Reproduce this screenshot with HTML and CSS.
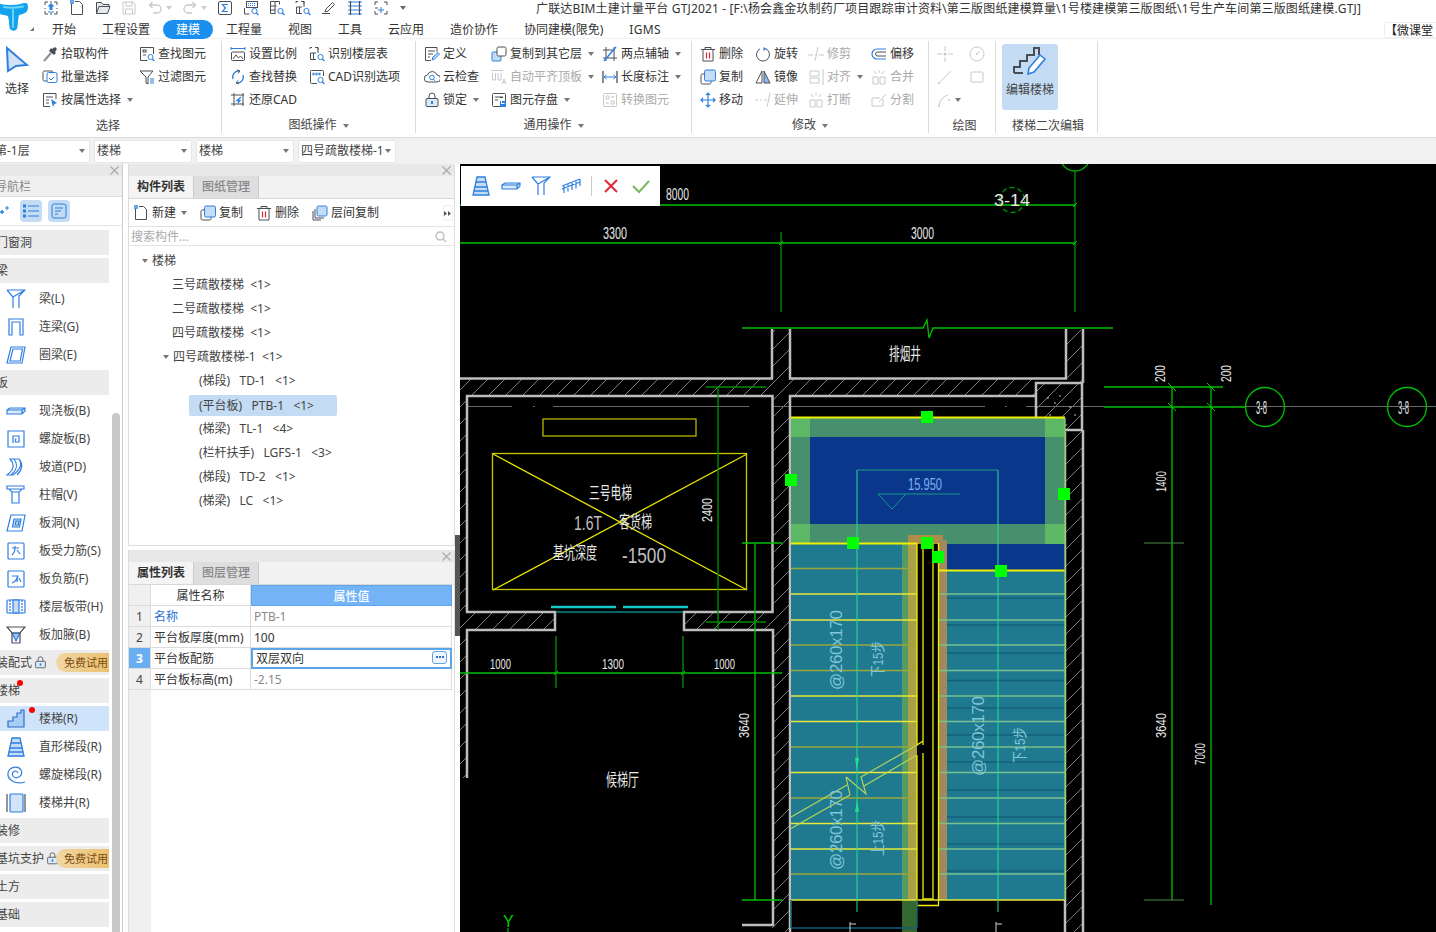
FILE: index.html
```html
<!DOCTYPE html>
<html lang="zh">
<head>
<meta charset="utf-8">
<title>GTJ2021</title>
<link rel="stylesheet" href="styles.css">
</head>
<body>
<svg class="defs" width="0" height="0" aria-hidden="true">
<defs>
<g id="x"><path d="M1.500 1.500l8 8M9.500 1.500l-8 8" stroke="#aaa" stroke-width="1.200" fill="none"/></g>
<g id="import"><path d="M2 2h3M11 2h3M2 14h3M11 14h3M2 2v3M14 2v3M2 11v3M14 11v3M2 8v1M14 8v1M7 2h2M7 14h2" fill="none" stroke="#4a4f57"/><path d="M8 3l3.500 3.500H9.500V10h-3V6.500H4.500z" fill="#2f7fe0"/><path d="M5 12h6" stroke="#2f7fe0"/></g>
<g id="newdoc"><path d="M2.500 3.500V14.500h11V4.500l-3-3H6" fill="none" stroke="#4a4f57"/><path d="M1 0h4v4H1z" fill="#2f7fe0" opacity=".7"/></g>
<g id="open"><path d="M1.500 13.500V2.500h5l1.500 2h6v2M1.500 13.500l2.500-7h11l-2.500 7z" fill="#e6e9ed" stroke="#4a4f57"/></g>
<g id="save"><path d="M2 2h10l2 2v10H2zM5 2v4h6V2M4.500 14V9h7v5" fill="none" stroke="#c8c8c8"/></g>
<g id="undo"><path d="M3 5h7a4 4 0 0 1 0 8H6M5.500 2L2.500 5l3 3" fill="none" stroke="#c8c8c8" stroke-width="1.300"/></g>
<g id="redo"><path d="M13 5H6a4 4 0 0 0 0 8h4M10.500 2l3 3-3 3" fill="none" stroke="#c8c8c8" stroke-width="1.300"/></g>
<g id="sum"><rect x="1.500" y="1.500" width="13" height="13" rx="1.500" fill="none" stroke="#4a4f57"/><path d="M11 4.500H5.500L8.500 8l-3 3.500H11" fill="none" stroke="#2f7fe0" stroke-width="1.200"/></g>
<g id="gridmag"><path d="M1.500 1.500h9v3M1.500 1.500v12h5M1.500 6h6M1.500 10h5M6 1.500v12" fill="none" stroke="#4a4f57"/><circle cx="11.500" cy="11" r="2.600" fill="none" stroke="#2f7fe0"/><path d="M13.400 13l2 2" stroke="#2f7fe0" stroke-width="1.300"/></g>
<g id="calcmag"><path d="M1.500 14V8M1.500 14h5" fill="none" stroke="#4a4f57"/><rect x="3.500" y="1.500" width="11" height="6" fill="none" stroke="#4a4f57"/><path d="M5 3.500h8M5 5.500h8" stroke="#2f7fe0" stroke-dasharray="1 1"/><circle cx="11.500" cy="11" r="2.600" fill="none" stroke="#2f7fe0"/><path d="M13.400 13l2 2" stroke="#2f7fe0" stroke-width="1.300"/></g>
<g id="pencil"><path d="M1 13.500h8" stroke="#4a4f57"/><path d="M4 12l1-3 6.500-6.500 2 2L7 11z" fill="#fff" stroke="#4a4f57"/></g>
<g id="columns"><path d="M1 2h14M1 14h14M1 6h14M1 10h14" stroke="#2f7fe0"/><path d="M3.500 1v14M12.500 1v14" stroke="#4a4f57" stroke-width="1.200"/></g>
<g id="scan"><path d="M2 5V2h3M11 2h3v3M14 11v3h-3M5 14H2v-3M2 8h3" fill="none" stroke="#4a4f57"/><path d="M8 7v6M5 10h6" stroke="#2f7fe0"/></g>

<g id="pick"><path d="M2 15l7-8" stroke="#8a9099" stroke-width="2"/><path d="M7 5l5 4 2-2-1-1 2-3-2-2-3 2-1-1z" fill="#4a4f57"/></g>
<g id="batch"><rect x="1" y="2" width="10" height="10" rx="1.500" fill="none" stroke="#4a4f57"/><rect x="5" y="3.500" width="10" height="10" rx="1.500" fill="#fff" stroke="#2f7fe0"/><path d="M7 9l2 2 3-3" fill="none" stroke="#2f7fe0"/></g>
<g id="attr"><path d="M14 7V1.500H1.500v13H8" fill="none" stroke="#4a4f57"/><path d="M4 5h7M4 8h3M4 11h3" stroke="#4a4f57"/><path d="M9 7l6 4-2.500 1L11 15z" fill="#2f7fe0"/></g>
<g id="find"><path d="M14.500 8V1.500h-13v13h7" fill="none" stroke="#4a4f57"/><rect x="4" y="4" width="3" height="2" fill="none" stroke="#4a4f57"/><path d="M4 9h3" stroke="#4a4f57"/><circle cx="11.500" cy="11" r="2.500" fill="none" stroke="#2f7fe0"/><path d="M13.300 13l2 2" stroke="#2f7fe0" stroke-width="1.300"/></g>
<g id="filter"><path d="M1 2h13L9 8v7l-2-1V8z" fill="none" stroke="#4a4f57"/><path d="M11 10h4M11 12h4M11 14h4" stroke="#2f7fe0"/></g>
<g id="scale"><path d="M1 1v3M15 1v3M1 2.500h14" stroke="#2f7fe0"/><rect x="1.500" y="6" width="13" height="8.500" rx="1" fill="none" stroke="#4a4f57"/><path d="M3 13l3-4 2.500 3 2-2 2.500 3" fill="none" stroke="#4a4f57"/></g>
<g id="replace"><path d="M3 10a6 6 0 0 1 6-8M13 6a6 6 0 0 1-6 8" fill="none" stroke="#2f7fe0" stroke-width="1.400"/><path d="M7 1l3 1-2 2.500M9 15l-3-1 2-2.500" fill="none" stroke="#4a4f57"/></g>
<g id="restore"><path d="M4 1v13M1 12h13M1 3h13M13 1v13" stroke="#4a4f57"/><path d="M11 5L7 8.500h3L8 11" fill="none" stroke="#2f7fe0" stroke-width="1.300"/></g>
<g id="floors"><path d="M1 3V1.500h2M6 1.500h3V4M1.500 7H7M1.500 7v6.500H7M4.500 7v6.500M9 1.500V7" fill="none" stroke="#4a4f57"/><circle cx="11.500" cy="11" r="2.600" fill="none" stroke="#2f7fe0"/><path d="M13.400 13l2 2" stroke="#2f7fe0" stroke-width="1.300"/></g>
<g id="cadopt"><path d="M14.500 7V2.500a1 1 0 0 0-1-1h-11a1 1 0 0 0-1 1v11a1 1 0 0 0 1 1H8" fill="none" stroke="#4a4f57"/><path d="M3.500 5h8" stroke="#2f7fe0" stroke-width="2.500" stroke-dasharray="2 1"/><circle cx="11.500" cy="11" r="2.600" fill="none" stroke="#2f7fe0"/><path d="M13.400 13l2 2" stroke="#2f7fe0" stroke-width="1.300"/></g>
<g id="define"><path d="M13 6V1.500H1.500v13H7" fill="none" stroke="#4a4f57"/><path d="M4 5h7M4 8h5M4 11h2" stroke="#4a4f57"/><path d="M8 14l1-3 5-4.500 1.500 1.500L10.500 13z" fill="#c5dcf5" stroke="#2f7fe0"/></g>
<g id="cloud"><path d="M4 13a3.500 3.500 0 0 1-.5-7 5 5 0 0 1 9.500 0 3.500 3.500 0 0 1 0 7z" fill="none" stroke="#4a4f57"/><circle cx="8" cy="8.500" r="2.300" fill="none" stroke="#2f7fe0"/><path d="M9.700 10.500l1.300 1.300" stroke="#2f7fe0"/></g>
<g id="lock"><rect x="2" y="6.500" width="12" height="8" rx="1" fill="#dce9f8" stroke="#4a4f57"/><path d="M5 6.500V4a3 3 0 0 1 6 0v2.500" fill="none" stroke="#4a4f57"/><rect x="7" y="9" width="2" height="3" fill="#2f7fe0"/></g>
<g id="copyup"><rect x="1" y="6" width="9" height="9" rx="1" fill="#c5dcf5" stroke="#2f7fe0"/><rect x="6" y="1" width="9" height="9" rx="1.500" fill="#fff" stroke="#4a4f57"/></g>
<g id="autotop"><path d="M0 1.500h12M1.500 4v7h3V4M7 4v7h3V4" fill="none" stroke="#c8c8c8"/><path d="M11 15l2-5 2 5M11.800 13.500h2.500" fill="none" stroke="#c8c8c8"/></g>
<g id="store"><rect x="1.500" y="1.500" width="13" height="13" rx="1" fill="none" stroke="#4a4f57"/><path d="M4 5h8M4 8h3M9 5.500h3" stroke="#4a4f57"/><rect x="9" y="9" width="6" height="6" fill="#2f7fe0"/><path d="M10.500 9v2.500h3" stroke="#fff" fill="none"/></g>
<g id="twopoint"><path d="M4 1v14M1 12h14M1 4h11M12 1v14" stroke="#4a4f57"/><path d="M2 15L14 1" stroke="#2f7fe0" stroke-width="1.500"/></g>
<g id="length"><path d="M1 2v12M15 2v12" stroke="#4a4f57" stroke-width="1.300"/><path d="M2 8h12M4.500 6L2 8l2.500 2M11.500 6L14 8l-2.500 2" fill="none" stroke="#2f7fe0"/></g>
<g id="convert"><rect x="1.500" y="1.500" width="13" height="13" rx="1" fill="none" stroke="#c8c8c8"/><path d="M4 4h3v3H4zM9 9h3v3H9zM9 5h3M12 5l-1-1M4 11h3M4 11l1 1" fill="none" stroke="#c8c8c8"/></g>
<g id="del"><path d="M1 3.500h14M5 3V1.500h6V3M3 3.500v11.500h10V3.500" fill="none" stroke="#4a4f57"/><path d="M6.500 6.500v6M9.500 6.500v6" stroke="#e02a2a" stroke-width="1.200"/></g>
<g id="copy"><rect x="1" y="5" width="10" height="10" rx="1.500" fill="none" stroke="#4a4f57"/><rect x="4.500" y="1" width="11" height="11" rx="1.500" fill="#c5dcf5" stroke="#2f7fe0"/></g>
<g id="copy2"><path d="M1 6v9h8M3 4v9h9" fill="none" stroke="#4a4f57"/><rect x="5" y="1" width="10" height="10" rx="1.500" fill="#c5dcf5" stroke="#2f7fe0"/></g>
<g id="move"><path d="M8 1v14M1 8h14M6 3l2-2 2 2M6 13l2 2 2-2M3 6L1 8l2 2M13 6l2 2-2 2" fill="none" stroke="#2f7fe0" stroke-width="1.200"/></g>
<g id="rotate"><path d="M11 2.800a6.500 6.500 0 1 1-6 0" fill="none" stroke="#4a4f57"/><path d="M8.500 1l3 2-3 2z" fill="#2f7fe0"/></g>
<g id="mirror"><path d="M7 2v12H1z" fill="none" stroke="#4a4f57"/><path d="M9 2v12h6z" fill="#8db9ec" stroke="#4a4f57"/></g>
<g id="trim"><path d="M0 9h5M7 9h2M11 9h5M10 1L7 15" fill="none" stroke="#c8c8c8"/></g>
<g id="extend"><path d="M0 8h3M5 8h2M9 8h3M15 1l-3 14" fill="none" stroke="#c8c8c8"/></g>
<g id="align"><path d="M15 0v16" stroke="#c8c8c8"/><path d="M2 2h9v5H2zM2 9h9v5H2z" fill="none" stroke="#c8c8c8"/></g>
<g id="merge"><path d="M2 8h5v7H2zM9 8h5v7H9z" fill="none" stroke="#c8c8c8"/><path d="M3 2l2 3M13 2l-2 3M8 1v3" stroke="#c8c8c8"/></g>
<g id="offset"><path d="M15 3H6a5 5 0 0 0 0 10h9" fill="none" stroke="#2f7fe0" stroke-width="1.200"/><path d="M15 6H6.500a2 2 0 0 0 0 4H15" fill="none" stroke="#4a4f57"/></g>
<g id="split"><path d="M12 7v7H1V6h8" fill="none" stroke="#c8c8c8"/><path d="M15 2L8 10" stroke="#c8c8c8"/></g>
<g id="point"><path d="M8 0v5M8 11v5M0 8h5M11 8h5" stroke="#c8c8c8"/><circle cx="8" cy="8" r="1.500" fill="#c8c8c8"/></g>
<g id="circ"><circle cx="8" cy="8" r="7" fill="none" stroke="#c8c8c8"/><circle cx="8" cy="8" r="1" fill="#c8c8c8"/><path d="M8 8l3-3" stroke="#c8c8c8"/></g>
<g id="line"><path d="M2 14L14 2" stroke="#c8c8c8"/><circle cx="2" cy="14" r="1" fill="#c8c8c8"/></g>
<g id="rectd"><rect x="2" y="3" width="12" height="10" rx="1" fill="none" stroke="#c8c8c8"/></g>
<g id="arc"><path d="M2 14a12 12 0 0 1 9-11" fill="none" stroke="#c8c8c8"/><circle cx="2" cy="14" r="1" fill="#c8c8c8"/><circle cx="12" cy="8" r="1" fill="#c8c8c8"/></g>

<g id="nbeam" fill="none" stroke="#2f7fe0" stroke-width="1.200"><path d="M1 1H19L13 7V19M1 1L7 8V19M7 8L19 1"/></g>
<g id="nlian" fill="none" stroke="#2f7fe0" stroke-width="1.200"><path d="M3 18V2h14v16h-3V5H6v13z"/></g>
<g id="nquan" fill="none" stroke="#2f7fe0" stroke-width="1.200"><path d="M5 2h14l-3 16H1zM7 4h9.500l-2.300 12H4z"/></g>
<g id="nslab" fill="#dbe9f9" stroke="#2f7fe0" stroke-width="1.200"><path d="M1 9l3-2h15v3l-3 3H1zM1 9h15v4M16 9l3-2"/></g>
<g id="nspiral" fill="none" stroke="#2f7fe0" stroke-width="1.200"><path d="M2 2h16v16H2zM7 14V7h6v6H9.500V10h1"/></g>
<g id="nramp" fill="none" stroke="#2f7fe0" stroke-width="1.200"><path d="M4 2c5 5 4 11-3 16h6c6-4 10-10 6-16zM8 2c4 5 3 11-3 16M14 3c3 5 2 10-3 15"/></g>
<g id="ncap" fill="none" stroke="#2f7fe0" stroke-width="1.200"><path d="M1 1h17v3H1zM3 4l3 3h7l3-3M6 7v11h7V7"/></g>
<g id="nhole" fill="none" stroke="#2f7fe0" stroke-width="1.200"><path d="M5 2h14l-3 16H1z"/><path d="M8 6h7l-1.500 8H6.500z" fill="#c5dcf5"/><path d="M10 8h3l-.7 4H9.300z"/></g>
<g id="nrs" fill="none" stroke="#2f7fe0" stroke-width="1.200"><rect x="2" y="2" width="16" height="16" rx="1"/><path d="M6 7h7M9 5c0 4 0 6-3 9M11 9l3 4"/></g>
<g id="nrf" fill="none" stroke="#2f7fe0" stroke-width="1.200"><rect x="2" y="2" width="16" height="16" rx="1"/><path d="M6 7h6c-1 3-3 6-6 7M10 9c1 0 2 1 1 4M13 9l2 4"/></g>
<g id="nband" stroke="#2f7fe0" stroke-width="1.200"><rect x="1" y="3" width="18" height="13" rx="1" fill="#fff"/><rect x="7" y="3" width="6" height="13" fill="#c5dcf5"/><path d="M4 3v13M16 3v13" stroke-dasharray="2 1"/></g>
<g id="nhaunch" stroke-width="1.200"><path d="M6 8h8l-4 8z" fill="#9cc4ef" stroke="#2f7fe0"/><path d="M1 2h18l-5 6H6zM6 8v10h8V8" fill="none" stroke="#4a4f57"/></g>
<g id="nstair"><path d="M2 18v-6h5V8h4V4h4V1h3v17z" fill="#a9cdf4" stroke="#2f6fc8" stroke-width="1.200"/></g>
<g id="nflight" fill="#c5dcf5" stroke="#2f7fe0" stroke-width="1.300"><path d="M6 1h8l4 18H2z"/><path d="M5 6h10M4 11h12M3 15h14" fill="none"/></g>
<g id="nspst" fill="none" stroke="#2f7fe0" stroke-width="1.200"><path d="M19 17c-9 3-18-2-17-9C3 2 12 0 15 5c3 6-5 10-8 6-2-4 3-7 5-3"/></g>
<g id="nwell" stroke-width="1.200"><rect x="4" y="1" width="13" height="18" rx="1" fill="#d2e4f9" stroke="#2f7fe0"/><path d="M1 1v18M19 1v18" stroke="#4a4f57"/></g>
</defs>
</svg>

<header class="titlebar">
  <div class="logo">
    <svg width="28" height="33" viewBox="0 0 28 33"><path d="M-2 3c4 1.500 9 2 14 2 4 0 8-1 12-2 3-.6 4 1 4 4 0 3-1 5-3 6-2 1-4 1.500-6 2-1 4-1 8-1.500 12-.5 5-7.500 5-8 0-.5-4-.5-7-1.500-11-3-1-6-1.500-9-2z" fill="#12a3ec"/><path d="M4 7c4 1 14 1 19-.5M13 10v17" stroke="#6fd4fa" stroke-width="2" fill="none" stroke-linecap="round"/></svg>
    <span class="logo-mark"></span>
  </div>
  <div class="title-main">
    <div class="quick">
      <div class="quick-icons">
        <svg class="qi" viewBox="0 0 16 16"><use href="#import"/></svg>
        <svg class="qi" viewBox="0 0 16 16"><use href="#newdoc"/></svg>
        <svg class="qi" viewBox="0 0 16 16"><use href="#open"/></svg>
        <svg class="qi" viewBox="0 0 16 16"><use href="#save"/></svg>
        <svg class="qi narrow" viewBox="0 0 16 16"><use href="#undo"/></svg><span class="qcaret"></span>
        <svg class="qi narrow" viewBox="0 0 16 16"><use href="#redo"/></svg><span class="qcaret"></span>
        <svg class="qi" viewBox="0 0 16 16"><use href="#sum"/></svg>
        <svg class="qi" viewBox="0 0 16 16"><use href="#calcmag"/></svg>
        <svg class="qi" viewBox="0 0 16 16"><use href="#gridmag"/></svg>
        <svg class="qi" viewBox="0 0 16 16"><use href="#floors"/></svg>
        <svg class="qi" viewBox="0 0 16 16"><use href="#pencil"/></svg>
        <svg class="qi" viewBox="0 0 16 16"><use href="#columns"/></svg>
        <svg class="qi" viewBox="0 0 16 16"><use href="#scan"/></svg>
        <span class="qcaret dark"></span>
      </div>
      <div class="doc-title">广联达BIM土建计量平台 GTJ2021 - [F:\杨会鑫金玖制药厂项目跟踪审计资料\第三版图纸建模算量\1号楼建模第三版图纸\1号生产车间第三版图纸建模.GTJ]</div>
    </div>
    <nav class="tabs">
      <span class="tab">开始</span><span class="tab">工程设置</span><span class="tab active">建模</span><span class="tab">工程量</span><span class="tab">视图</span><span class="tab">工具</span><span class="tab">云应用</span><span class="tab">造价协作</span><span class="tab">协同建模(限免)</span><span class="tab igms">IGMS</span>
      <span class="promo">【微课堂</span>
    </nav>
  </div>
</header>

<section class="ribbon">
  <div class="group g1">
    <div class="group-body">
      <div class="big-btn">
        <svg width="24" height="27" viewBox="0 0 24 27"><path d="M2 2l20 17-11 1-8 5z" fill="#cfe2f8" stroke="#2f7fe0" stroke-width="2"/></svg>
        <span>选择</span>
      </div>
      <div class="col w98">
        <div class="item"><svg class="ic" viewBox="0 0 16 16"><use href="#pick"/></svg>拾取构件</div>
        <div class="item"><svg class="ic" viewBox="0 0 16 16"><use href="#batch"/></svg>批量选择</div>
        <div class="item"><svg class="ic" viewBox="0 0 16 16"><use href="#attr"/></svg>按属性选择<i class="caret"></i></div>
      </div>
      <div class="col">
        <div class="item"><svg class="ic" viewBox="0 0 16 16"><use href="#find"/></svg>查找图元</div>
        <div class="item"><svg class="ic" viewBox="0 0 16 16"><use href="#filter"/></svg>过滤图元</div>
      </div>
    </div>
    <div class="group-label">选择</div>
  </div>
  <div class="group g2">
    <div class="group-body">
      <div class="col w79">
        <div class="item"><svg class="ic" viewBox="0 0 16 16"><use href="#scale"/></svg>设置比例</div>
        <div class="item"><svg class="ic" viewBox="0 0 16 16"><use href="#replace"/></svg>查找替换</div>
        <div class="item"><svg class="ic" viewBox="0 0 16 16"><use href="#restore"/></svg>还原CAD</div>
      </div>
      <div class="col">
        <div class="item"><svg class="ic" viewBox="0 0 16 16"><use href="#floors"/></svg>识别楼层表</div>
        <div class="item"><svg class="ic" viewBox="0 0 16 16"><use href="#cadopt"/></svg>CAD识别选项</div>
      </div>
    </div>
    <div class="group-label">图纸操作<i class="caret"></i></div>
  </div>
  <div class="group g3">
    <div class="group-body">
      <div class="col w67">
        <div class="item"><svg class="ic" viewBox="0 0 16 16"><use href="#define"/></svg>定义</div>
        <div class="item"><svg class="ic" viewBox="0 0 16 16"><use href="#cloud"/></svg>云检查</div>
        <div class="item"><svg class="ic" viewBox="0 0 16 16"><use href="#lock"/></svg>锁定<i class="caret"></i></div>
      </div>
      <div class="col w111">
        <div class="item"><svg class="ic" viewBox="0 0 16 16"><use href="#copyup"/></svg>复制到其它层<i class="caret"></i></div>
        <div class="item off"><svg class="ic" viewBox="0 0 16 16"><use href="#autotop"/></svg>自动平齐顶板<i class="caret"></i></div>
        <div class="item"><svg class="ic" viewBox="0 0 16 16"><use href="#store"/></svg>图元存盘<i class="caret"></i></div>
      </div>
      <div class="col">
        <div class="item"><svg class="ic" viewBox="0 0 16 16"><use href="#twopoint"/></svg>两点辅轴<i class="caret"></i></div>
        <div class="item"><svg class="ic" viewBox="0 0 16 16"><use href="#length"/></svg>长度标注<i class="caret"></i></div>
        <div class="item off"><svg class="ic" viewBox="0 0 16 16"><use href="#convert"/></svg>转换图元</div>
      </div>
    </div>
    <div class="group-label">通用操作<i class="caret"></i></div>
  </div>
  <div class="group g4">
    <div class="group-body">
      <div class="col w55">
        <div class="item"><svg class="ic" viewBox="0 0 16 16"><use href="#del"/></svg>删除</div>
        <div class="item"><svg class="ic" viewBox="0 0 16 16"><use href="#copy"/></svg>复制</div>
        <div class="item"><svg class="ic" viewBox="0 0 16 16"><use href="#move"/></svg>移动</div>
      </div>
      <div class="col w53">
        <div class="item"><svg class="ic" viewBox="0 0 16 16"><use href="#rotate"/></svg>旋转</div>
        <div class="item"><svg class="ic" viewBox="0 0 16 16"><use href="#mirror"/></svg>镜像</div>
        <div class="item off"><svg class="ic" viewBox="0 0 16 16"><use href="#extend"/></svg>延伸</div>
      </div>
      <div class="col w63">
        <div class="item off"><svg class="ic" viewBox="0 0 16 16"><use href="#trim"/></svg>修剪</div>
        <div class="item off"><svg class="ic" viewBox="0 0 16 16"><use href="#align"/></svg>对齐<i class="caret"></i></div>
        <div class="item off"><svg class="ic" viewBox="0 0 16 16"><use href="#merge"/></svg>打断</div>
      </div>
      <div class="col">
        <div class="item"><svg class="ic" viewBox="0 0 16 16"><use href="#offset"/></svg>偏移</div>
        <div class="item off"><svg class="ic" viewBox="0 0 16 16"><use href="#merge"/></svg>合并</div>
        <div class="item off"><svg class="ic" viewBox="0 0 16 16"><use href="#split"/></svg>分割</div>
      </div>
    </div>
    <div class="group-label">修改<i class="caret"></i></div>
  </div>
  <div class="group g5">
    <div class="group-body draw-grid">
      <svg class="ic" viewBox="0 0 16 16"><use href="#point"/></svg><svg class="ic" viewBox="0 0 16 16"><use href="#circ"/></svg>
      <svg class="ic" viewBox="0 0 16 16"><use href="#line"/></svg><svg class="ic" viewBox="0 0 16 16"><use href="#rectd"/></svg>
      <div class="arc-cell"><svg class="ic" viewBox="0 0 16 16"><use href="#arc"/></svg><i class="caret"></i></div><span></span>
    </div>
    <div class="group-label">绘图</div>
  </div>
  <div class="group g6">
    <div class="group-body">
      <div class="stair-btn">
        <svg width="34" height="28" viewBox="0 0 34 28"><path d="M1 26v-6h6v-6h7V8h7V1h5v7" fill="none" stroke="#4a4f57" stroke-width="2"/><path d="M1 26h9" stroke="#4a4f57" stroke-width="2"/><path d="M15 27l1-6 11-13 5 4-11 13z" fill="#fff" stroke="#2f7fe0" stroke-width="1.600"/></svg>
        <span>编辑楼梯</span>
      </div>
    </div>
    <div class="group-label">楼梯二次编辑</div>
  </div>
</section>

<section class="selectbar">
  <div class="sel first">第-1层<i class="caret"></i></div>
  <div class="sel">楼梯<i class="caret"></i></div>
  <div class="sel">楼梯<i class="caret"></i></div>
  <div class="sel">四号疏散楼梯-1<i class="caret"></i></div>
</section>

<main class="workspace">
  <aside class="nav">
    <div class="closebar"><svg width="11" height="11" viewBox="0 0 11 11"><use href="#x"/></svg></div>
    <div class="nav-title">导航栏</div>
    <div class="nav-tools">
      <svg class="plus" width="9" height="12" viewBox="0 0 9 12"><path d="M0 7h4M2 5v4" stroke="#2f7fe0" stroke-width="1.400"/><path d="M5 3h4M7 1v4" stroke="#2f7fe0"/></svg>
      <span class="toggle"><svg width="16" height="14" viewBox="0 0 16 14"><path d="M5 2h11M5 7h11M5 12h11" stroke="#2f7fe0"/><rect x="0.500" y="1" width="2" height="2" fill="none" stroke="#2f7fe0"/><rect x="0.500" y="6" width="2" height="2" fill="none" stroke="#2f7fe0"/><rect x="0.500" y="11" width="2" height="2" fill="none" stroke="#2f7fe0"/></svg></span>
      <span class="toggle"><svg width="16" height="16" viewBox="0 0 16 16"><rect x="1" y="1" width="14" height="14" rx="2" fill="none" stroke="#2f7fe0"/><path d="M4 5h8M4 8h6M4 11h3" stroke="#2f7fe0"/></svg></span>
    </div>
    <div class="nav-body">
      <div class="nav-list">
        <div class="ngroup">门窗洞</div>
        <div class="ngroup">梁</div>
        <div class="nitem"><svg class="nic" viewBox="0 0 20 20"><use href="#nbeam"/></svg>梁(L)</div>
        <div class="nitem"><svg class="nic" viewBox="0 0 20 20"><use href="#nlian"/></svg>连梁(G)</div>
        <div class="nitem"><svg class="nic" viewBox="0 0 20 20"><use href="#nquan"/></svg>圈梁(E)</div>
        <div class="ngroup">板</div>
        <div class="nitem"><svg class="nic" viewBox="0 0 20 20"><use href="#nslab"/></svg>现浇板(B)</div>
        <div class="nitem"><svg class="nic" viewBox="0 0 20 20"><use href="#nspiral"/></svg>螺旋板(B)</div>
        <div class="nitem"><svg class="nic" viewBox="0 0 20 20"><use href="#nramp"/></svg>坡道(PD)</div>
        <div class="nitem"><svg class="nic" viewBox="0 0 20 20"><use href="#ncap"/></svg>柱帽(V)</div>
        <div class="nitem"><svg class="nic" viewBox="0 0 20 20"><use href="#nhole"/></svg>板洞(N)</div>
        <div class="nitem"><svg class="nic" viewBox="0 0 20 20"><use href="#nrs"/></svg>板受力筋(S)</div>
        <div class="nitem"><svg class="nic" viewBox="0 0 20 20"><use href="#nrf"/></svg>板负筋(F)</div>
        <div class="nitem"><svg class="nic" viewBox="0 0 20 20"><use href="#nband"/></svg>楼层板带(H)</div>
        <div class="nitem"><svg class="nic" viewBox="0 0 20 20"><use href="#nhaunch"/></svg>板加腋(B)</div>
        <div class="ngroup">装配式<svg class="nlock" viewBox="0 0 16 16"><use href="#lock"/></svg><span class="trial">免费试用</span></div>
        <div class="ngroup">楼梯<i class="dot dot-group"></i></div>
        <div class="nitem current"><svg class="nic" viewBox="0 0 20 20"><use href="#nstair"/></svg>楼梯(R)<i class="dot dot-item"></i></div>
        <div class="nitem"><svg class="nic" viewBox="0 0 20 20"><use href="#nflight"/></svg>直形梯段(R)</div>
        <div class="nitem"><svg class="nic" viewBox="0 0 20 20"><use href="#nspst"/></svg>螺旋梯段(R)</div>
        <div class="nitem"><svg class="nic" viewBox="0 0 20 20"><use href="#nwell"/></svg>楼梯井(R)</div>
        <div class="ngroup">装修</div>
        <div class="ngroup">基坑支护<svg class="nlock" viewBox="0 0 16 16"><use href="#lock"/></svg><span class="trial">免费试用</span></div>
        <div class="ngroup">土方</div>
        <div class="ngroup">基础</div>
      </div>
      <div class="scroll"><div class="thumb"></div></div>
    </div>
  </aside>

  <div class="panels">
    <section class="panel list-panel">
      <div class="closebar"><svg width="11" height="11" viewBox="0 0 11 11"><use href="#x"/></svg></div>
      <div class="ptabs"><span class="ptab on">构件列表</span><span class="ptab">图纸管理</span></div>
      <div class="ptools">
        <span class="ptool"><svg class="ic" viewBox="0 0 16 16"><use href="#newdoc"/></svg>新建<i class="caret"></i></span>
        <span class="ptool"><svg class="ic" viewBox="0 0 16 16"><use href="#copy"/></svg>复制</span>
        <span class="ptool"><svg class="ic" viewBox="0 0 16 16"><use href="#del"/></svg>删除</span>
        <span class="ptool"><svg class="ic" viewBox="0 0 16 16"><use href="#copy2"/></svg>层间复制</span>
        <span class="more"><svg width="8" height="7" viewBox="0 0 8 7"><path d="M0 1l3 2.500L0 6zM4 1l3 2.500L4 6z" fill="#555"/></svg></span>
      </div>
      <div class="search"><span>搜索构件...</span><svg width="12" height="12" viewBox="0 0 12 12"><circle cx="5" cy="5" r="4" fill="none" stroke="#bbb" stroke-width="1.300"/><path d="M8 8l3 3" stroke="#bbb" stroke-width="1.300"/></svg></div>
      <div class="tree">
        <div class="row l1"><i class="caret"></i>楼梯</div>
        <div class="row l2">三号疏散楼梯 &nbsp;&lt;1&gt;</div>
        <div class="row l2">二号疏散楼梯 &nbsp;&lt;1&gt;</div>
        <div class="row l2">四号疏散楼梯 &nbsp;&lt;1&gt;</div>
        <div class="row l2 open"><i class="caret"></i>四号疏散楼梯-1 &nbsp;&lt;1&gt;</div>
        <div class="row l3">(梯段) &nbsp;&nbsp;TD-1 &nbsp;&nbsp;&lt;1&gt;</div>
        <div class="row l3"><span class="picked">(平台板) &nbsp;&nbsp;PTB-1 &nbsp;&nbsp;&lt;1&gt;</span></div>
        <div class="row l3">(梯梁) &nbsp;&nbsp;TL-1 &nbsp;&nbsp;&lt;4&gt;</div>
        <div class="row l3">(栏杆扶手) &nbsp;&nbsp;LGFS-1 &nbsp;&nbsp;&lt;3&gt;</div>
        <div class="row l3">(梯段) &nbsp;&nbsp;TD-2 &nbsp;&nbsp;&lt;1&gt;</div>
        <div class="row l3">(梯梁) &nbsp;&nbsp;LC &nbsp;&nbsp;&lt;1&gt;</div>
      </div>
    </section>
    <section class="panel prop-panel">
      <div class="closebar"><svg width="11" height="11" viewBox="0 0 11 11"><use href="#x"/></svg></div>
      <div class="ptabs"><span class="ptab on">属性列表</span><span class="ptab">图层管理</span></div>
      <div class="ptable">
        <div class="c idx"></div><div class="c head">属性名称</div><div class="c headv">属性值</div>
        <div class="c idx">1</div><div class="c blue">名称</div><div class="c grey">PTB-1</div>
        <div class="c idx">2</div><div class="c">平台板厚度(mm)</div><div class="c">100</div>
        <div class="c idx sel-idx">3</div><div class="c">平台板配筋</div><div class="c editing">双层双向<span class="dots"><svg width="9" height="3" viewBox="0 0 9 3"><path d="M1 0h2v2H1zM4 0h2v2H4zM7 0h2v2H7z" fill="#2f6fc8"/></svg></span></div>
        <div class="c idx">4</div><div class="c">平台板标高(m)</div><div class="c grey">-2.15</div>
        <div class="idx-fill"></div>
      </div>
    </section>
  </div>

  <div class="splitter"><span class="handle"></span></div>

  <div class="canvas">
    <svg class="cad" viewBox="460 164 976 768" width="976" height="768">
      <defs>
        <pattern id="hatch" patternUnits="userSpaceOnUse" width="17" height="17"><path d="M-1 18L18 -1" stroke="#7d7d7d" stroke-width="1"/></pattern>
      </defs>
      <rect x="460" y="164" width="976" height="768" fill="#000"/>
      <g fill="url(#hatch)">
        <rect x="460" y="379" width="576" height="17"/>
        <rect x="772" y="330" width="18" height="66"/>
        <rect x="1066" y="330" width="17" height="53"/>
        <rect x="772" y="396" width="18" height="536"/>
        <rect x="1065" y="431" width="18" height="501"/>
        <rect x="460" y="396" width="7" height="234"/>
        <rect x="460" y="612" width="96" height="18"/>
        <rect x="683" y="612" width="89" height="18"/>
        <rect x="460" y="630" width="7" height="148"/>
        <rect x="1036" y="383" width="46" height="47"/>
      </g>
      <path d="M466 406.500H512M533 406.500H535M553 406.500H749M772 406.500H790M790 406.500H985M1005 406.500H1007M1026 406.500H1104M1245 406.500H1436" stroke="#6a6a6a" fill="none"/>
      <g fill="none" stroke="#bdbdbd" stroke-width="2.500">
        <path d="M460 378.500H772V329"/>
        <path d="M790 329V378.500H1066V329"/>
        <path d="M1083 329V383"/>
        <path d="M790 932V396H1036"/>
        <path d="M467 778V630H555V612H467V396H772.500V612H684V630H773V925H742"/>
        <path d="M1065 432V932M1083 430V932"/>
        <rect x="1036" y="383" width="46" height="47"/>
      </g>
      <g fill="#ddd"><circle cx="1048" cy="398" r=".8"/><circle cx="1060" cy="396" r=".8"/><circle cx="1050" cy="415" r=".8"/><circle cx="1070" cy="407" r=".8"/><circle cx="1055" cy="403" r=".8"/><circle cx="1075" cy="415" r=".8"/><circle cx="1044" cy="421" r=".8"/><circle cx="1066" cy="425" r=".8"/></g>

      <g fill="none" stroke="#e6e600" stroke-width="1.300">
        <rect x="543" y="419" width="153" height="17" stroke="#b5b500"/>
        <rect x="492.500" y="453.500" width="254" height="136" stroke="#c5c500"/>
        <path d="M493 454L747 590M747 454L493 590"/>
      </g>
      <path d="M551 607H616M623 607H688" stroke="#10c8c8" stroke-width="2.500"/>
      <path d="M556 612H683" stroke="#0a8a8a" stroke-width="1.500"/>

      <rect x="791" y="417" width="274" height="483" fill="#1f7a90"/>
      <rect x="791" y="417" width="274" height="127" fill="#47906e"/>
      <rect x="810" y="437" width="235" height="87" fill="#0a378c"/>
      <g fill="#5cb864"><rect x="791" y="417" width="19" height="20"/><rect x="1045" y="417" width="20" height="20"/><rect x="791" y="524" width="19" height="20"/><rect x="1045" y="524" width="20" height="20"/></g>
      <rect x="947" y="544" width="118" height="26" fill="#0a378c"/>
      <rect x="902" y="544" width="6" height="356" fill="#559a62"/>
      <rect x="908" y="535" width="9" height="365" fill="#ab9f47"/>
      <rect x="908" y="535" width="35" height="10" fill="#b08c4a"/>
      <rect x="938" y="540" width="9" height="360" fill="#a3885c"/>
      <rect x="902" y="900" width="15" height="32" fill="#35682f"/>
      <rect x="917" y="544" width="21" height="362" fill="#000"/>

      <g stroke-width="1.300" fill="none">
        <path d="M791 568.500H917M791 645H917M791 670.500H917M791 747H917M791 798H917M791 874H917" stroke="#9aa63a"/>
        <path d="M791 594H917M791 620H917M791 696H917M791 721.500H917M791 772.500H917M791 823.500H917M791 849H917M791 900H1065" stroke="#e8e83a"/>
        <path d="M938 594H1065M938 620H1065M938 645H1065M938 670.500H1065M938 696H1065M938 721.500H1065M938 747H1065M938 772.500H1065M938 798H1065M938 823.500H1065M938 849H1065M938 874H1065" stroke="#7ac08a"/>
        <path d="M947 598H1064M947 625H1064M947 653H1064M947 680.500H1064M947 708H1064M947 735H1064M947 762H1064M947 790H1064M947 817H1064M947 844H1064M947 871H1064" stroke="#12607c"/>
        <path d="M791 417.500H1065M791 543.500H917M938 570.500H1065" stroke="#f0f000" stroke-width="1.800"/>
        <path d="M1065 418V900" stroke="#8fd060"/>
        <path d="M917 543V745L923 741M917 755V905.500H938.500V543M923 745L923 543M923 753V899H933V543" stroke="#f0f000"/>
      </g>

      <path d="M791 817L847 785M791 828.500L850 795M846 777L866 794L861 777L917 745M864 786L917 755M846 777L850 795" fill="none" stroke="#b8d85a" stroke-width="1.100"/>

      <path d="M857 470V912M998 470V912" stroke="#20e090" stroke-width="1"/>
      <path d="M857 470H998" stroke="#1a9e80" stroke-width="1"/>
      <path d="M878 494H960M878 494L892 509L906 494" fill="none" stroke="#109a88"/>
      <path d="M855 758h4l-2 12zM855 812h4l-2-12z" fill="#20e090"/>
      <path d="M791 928H917M791 900V928M917 900V928" fill="none" stroke="#0e5e78" stroke-width="1.500"/>
      <text class="cad-t" x="908" y="490" fill="#7fb0ec" font-size="16" textLength="34" lengthAdjust="spacingAndGlyphs">15.950</text>

      <g fill="#00ff00">
        <rect x="921" y="411" width="12" height="12"/><rect x="785" y="474" width="12" height="12"/><rect x="1058" y="488" width="12" height="12"/><rect x="847" y="537" width="12" height="12"/><rect x="921" y="537" width="12" height="12"/><rect x="932" y="551" width="12" height="12"/><rect x="995" y="565" width="12" height="12"/>
      </g>

      <g fill="none" stroke="#00c000" stroke-width="1.300">
        <path d="M460 205H1075M460 243H1075M742 328H923L927 320L929 338L933 328H1113"/>
        <path d="M1104 387H1223M1104 407H1245M1172 387V900M1211 387V905"/>
        <path d="M460 673H782M755 543V900M742 543H782M742 900H782"/>
        <circle cx="1265" cy="407" r="19.500"/><circle cx="1407" cy="407" r="19.500"/>
        <circle cx="1075" cy="156" r="15"/>
      </g>
      <path d="M1144 543H1184M1144 900H1184" stroke="#4a8a4a" fill="none"/>
      <g fill="none" stroke="#008a00" stroke-width="1.400">
        <path d="M781 232V312M1075 170V312M718 387V630M706 387H766M706 622H766M556 636V688M683 636V688"/>
        <circle cx="1012" cy="200" r="12.500" stroke-dasharray="5 3"/>
      </g>
      <path d="M1168 383l4 4 4 4M1207 383l4 4 4 4M1168 403l8 8M1207 403l8 8M779 245l4-4M1073 207l4-4M1073 245l4-4M554 675l4-4M681 675l4-4" stroke="#00d000" fill="none"/>

      <g class="cad-t" fill="#e8e8e8">
        <text x="666" y="200" font-size="16" textLength="23" lengthAdjust="spacingAndGlyphs">8000</text>
        <text x="603" y="239" font-size="16" textLength="24" lengthAdjust="spacingAndGlyphs">3300</text>
        <text x="911" y="239" font-size="16" textLength="23" lengthAdjust="spacingAndGlyphs">3000</text>
        <text x="994" y="206" font-size="17" textLength="36" lengthAdjust="spacingAndGlyphs">3-14</text>
        <text x="889" y="360" font-size="17" textLength="32" lengthAdjust="spacingAndGlyphs">排烟井</text>
        <text x="589" y="499" font-size="17" textLength="43" lengthAdjust="spacingAndGlyphs">三号电梯</text>
        <text x="574" y="530" font-size="21" textLength="28" lengthAdjust="spacingAndGlyphs" fill="#c0c0c0">1.6T</text>
        <text x="619" y="528" font-size="17" textLength="33" lengthAdjust="spacingAndGlyphs">客货梯</text>
        <text x="553" y="559" font-size="17" textLength="44" lengthAdjust="spacingAndGlyphs">基坑深度</text>
        <text x="622" y="563" font-size="22" textLength="44" lengthAdjust="spacingAndGlyphs" fill="#c0c0c0">-1500</text>
        <text x="490" y="669" font-size="15" textLength="21" lengthAdjust="spacingAndGlyphs">1000</text>
        <text x="602" y="669" font-size="15" textLength="22" lengthAdjust="spacingAndGlyphs">1300</text>
        <text x="714" y="669" font-size="15" textLength="21" lengthAdjust="spacingAndGlyphs">1000</text>
        <text x="606" y="786" font-size="17" textLength="33" lengthAdjust="spacingAndGlyphs">候梯厅</text>
        <text x="1256" y="414" font-size="18" textLength="11" lengthAdjust="spacingAndGlyphs">3-8</text>
        <text x="1398" y="414" font-size="18" textLength="11" lengthAdjust="spacingAndGlyphs">3-8</text>
        <text transform="rotate(-90 712 522)" x="712" y="522" font-size="15" textLength="24" lengthAdjust="spacingAndGlyphs">2400</text>
        <text transform="rotate(-90 749 738)" x="749" y="738" font-size="15" textLength="25" lengthAdjust="spacingAndGlyphs">3640</text>
        <text transform="rotate(-90 1165 382)" x="1165" y="382" font-size="15" textLength="17" lengthAdjust="spacingAndGlyphs">200</text>
        <text transform="rotate(-90 1231 382)" x="1231" y="382" font-size="15" textLength="17" lengthAdjust="spacingAndGlyphs">200</text>
        <text transform="rotate(-90 1166 492)" x="1166" y="492" font-size="15" textLength="21" lengthAdjust="spacingAndGlyphs">1400</text>
        <text transform="rotate(-90 1166 738)" x="1166" y="738" font-size="15" textLength="25" lengthAdjust="spacingAndGlyphs">3640</text>
        <text transform="rotate(-90 1205 765)" x="1205" y="765" font-size="15" textLength="22" lengthAdjust="spacingAndGlyphs">7000</text>
      </g>
      <g class="cad-t" fill="#80c6d8">
        <text transform="rotate(-90 842 690)" x="842" y="690" font-size="17" textLength="80" lengthAdjust="spacing">@260x170</text>
        <text transform="rotate(-90 984 776)" x="984" y="776" font-size="17" textLength="80" lengthAdjust="spacing">@260x170</text>
        <text transform="rotate(-90 842 870)" x="842" y="870" font-size="17" textLength="80" lengthAdjust="spacing">@260x170</text>
        <text transform="rotate(-90 883 677)" x="883" y="677" font-size="15" textLength="36" lengthAdjust="spacingAndGlyphs">下15步</text>
        <text transform="rotate(-90 1025 763)" x="1025" y="763" font-size="15" textLength="36" lengthAdjust="spacingAndGlyphs">下15步</text>
        <text transform="rotate(-90 883 856)" x="883" y="856" font-size="15" textLength="36" lengthAdjust="spacingAndGlyphs">上15步</text>
      </g>
      <path d="M850 932V922M850 924h6M996 932V922M996 924h6" stroke="#d0d0d0" fill="none"/>
      <text class="cad-t" x="503" y="927" font-size="16" fill="#00d000">Y</text>
      <path d="M508 928V932" stroke="#00d000"/>
    </svg>

    <div class="stair-tools">
      <svg class="cic" viewBox="0 0 20 20"><use href="#nflight"/></svg>
      <svg class="cic" viewBox="0 0 20 20"><use href="#nslab"/></svg>
      <svg class="cic" viewBox="0 0 20 20"><use href="#nbeam"/></svg>
      <svg class="cic" viewBox="0 0 20 20"><path d="M1 10l18-7M1 13l18-7M3 10v7M7 8.500v7M11 7v7M15 5.500v7M19 3v7" fill="none" stroke="#2f7fe0" stroke-width="1.200"/></svg>
      <span class="tool-sep"></span>
      <svg class="cic" viewBox="0 0 20 20"><path d="M4 4l12 12M16 4L4 16" stroke="#e02a3a" stroke-width="2"/></svg>
      <svg class="cic" viewBox="0 0 20 20"><path d="M2 10l6 6L18 5" fill="none" stroke="#7ab860" stroke-width="2"/></svg>
    </div>
  </div>
</main>
</body>
</html>
```
FILE: styles.css
```css
* { box-sizing: border-box; }
html, body { margin: 0; height: 100%; }
body {
  width: 1436px; height: 932px; overflow: hidden; display: flex; flex-direction: column;
  background: #fff; color: #333;
  font: 12px/16px "Noto Sans", "Noto Sans CJK SC", sans-serif;
}
.defs { position: absolute; }
i { font-style: normal; }

.caret { display: inline-block; width: 0; height: 0; margin-left: 6px; vertical-align: middle;
  border: 3px solid transparent; border-top: 4px solid #777; border-bottom: 0; }

/* title */
.titlebar { height: 39px; display: flex; border-bottom: 1px solid #f2f2f2; flex: none; }
.logo { width: 39px; flex: none; display: flex; align-items: flex-start; }
.logo svg { flex: none; }
.logo-mark { width: 0; height: 0; margin: 27px 0 0 2px; border-left: 4px solid transparent; border-bottom: 4px solid #777; }
.title-main { flex: 1; min-width: 0; }
.quick { height: 20px; display: flex; align-items: flex-start; }
.quick-icons { display: flex; align-items: center; width: 369px; padding: 0 0 0 4px; height: 16px; flex: none; }
.qi { width: 16px; height: 16px; margin-right: 10px; flex: none; }
.qi.narrow { margin-right: 3px; }
.qcaret { width: 0; height: 0; border: 3px solid transparent; border-top: 4px solid #ccc; border-bottom: 0; margin-right: 10px; }
.qcaret.dark { border-top-color: #666; margin-left: 1px; }
.doc-title { margin-left: 128px; white-space: nowrap; font-size: 12px; line-height: 17px; color: #333; letter-spacing: .145px; }
.tabs { height: 19px; display: flex; align-items: center; }
.tab { padding: 0 13px; height: 19px; line-height: 19px; white-space: nowrap; color: #333; }
.tab.igms { letter-spacing: .3px; }
.tab.active { background: #1b8ff0; color: #fff; border-radius: 10px; width: 50px; padding: 0; text-align: center; }
.promo { margin-left: auto; width: 52px; height: 16px; line-height: 15px; border: 1px solid #eee; border-right: 0; border-radius: 3px 0 0 3px; white-space: nowrap; overflow: hidden; color: #222; }

/* ribbon */
.ribbon { height: 99px; flex: none; display: flex; padding: 2px 0 4px; border-bottom: 1px solid #dcdcdc; }
.group { display: flex; flex-direction: column; border-right: 1px solid #dcdcdc; padding-left: 8px; flex: none; }
.g1 { width: 222px; padding-left: 0; }
.g2 { width: 194px; }
.g3 { width: 276px; }
.g4 { width: 237px; }
.g5 { width: 67px; padding-left: 0; }
.g6 { width: 102px; padding-left: 6px; }
.group-body { height: 75px; display: flex; flex: none; }
.group-label { flex: 1; text-align: center; line-height: 17px; color: #444; white-space: nowrap; margin-left: -8px; }
.g1 .group-label { margin: 0 5px 0 0; line-height: 19px; }
.g5 .group-label { margin: 0 0 0 5px; line-height: 19px; }
.g6 .group-label { margin: 0 0 0 -3px; line-height: 19px; }
.col { display: flex; flex-direction: column; padding-top: 1px; flex: none; }
.w98 { width: 97px; } .w79 { width: 79px; } .w67 { width: 67px; } .w111 { width: 111px; } .w55 { width: 55px; } .w53 { width: 53px; } .w63 { width: 63px; }
.item { height: 23px; display: flex; align-items: center; white-space: nowrap; color: #333; }
.item.off { color: #aaa; }
.ic { width: 16px; height: 16px; margin-right: 3px; flex: none; }
.big-btn { width: 42px; padding: 5px 0 0 5px; display: flex; flex-direction: column; flex: none; }
.big-btn span { margin: 7px 0 0 -5px; line-height: 18px; width: 34px; text-align: center; }
.draw-grid { display: grid; grid-template-columns: 32px 32px; grid-auto-rows: 23px; align-items: center; padding: 1px 0 0 8px; align-content: start; }
.arc-cell { display: flex; align-items: center; }
.arc-cell .caret { margin-left: -1px; }
.stair-btn { width: 56px; height: 66px; margin-top: 3px; background: #c3dbf3; border-radius: 3px; display: flex; flex-direction: column; align-items: center; padding-top: 3px; color: #444; }
.stair-btn span { margin-top: 7px; }

/* select bar */
.selectbar { height: 26px; flex: none; background: #f1f1f1; display: flex; align-items: center; gap: 4px; overflow: hidden; }
.sel { width: 98px; height: 23px; padding: 0 3px 0 2px; flex: none; background: #fff; border: 1px solid #e6e6e6; border-radius: 2px; display: flex; align-items: center; justify-content: space-between; white-space: nowrap; color: #444; }
.sel .caret { margin: 0 1px 0 0; }
.sel.first { width: 98px; margin-left: -8px; }

/* workspace */
.workspace { flex: 1; min-height: 0; display: flex; background: #fff; }
.closebar { height: 12px; flex: none; background: #e8e8e8; display: flex; justify-content: flex-end; align-items: center; padding-right: 2px; overflow: hidden; }

.nav { width: 123px; flex: none; display: flex; flex-direction: column; border-right: 1px solid #ccc; overflow: hidden; }
.nav-title { height: 21px; flex: none; background: #f0f0f0; color: #888; text-indent: -5px; line-height: 21px; border-bottom: 1px solid #ddd; }
.nav-tools { height: 29px; flex: none; display: flex; align-items: center; border-bottom: 1px solid #e4e4e4; }
.plus { width: 9px; height: 12px; margin: 0 11px 0 0; flex: none; }
.toggle { width: 22px; height: 22px; background: #c3dbf3; border-radius: 4px; display: flex; align-items: center; justify-content: center; margin-right: 6px; }
.nav-body { flex: 1; min-height: 0; display: flex; }
.nav-list { width: 109px; padding-top: 4px; flex: none; }
.ngroup { height: 25px; margin-bottom: 3px; background: #ececec; display: flex; align-items: center; text-indent: -4px; position: relative; white-space: nowrap; color: #444; }
.nitem { height: 25px; margin-bottom: 3px; display: flex; align-items: center; padding-left: 6px; position: relative; white-space: nowrap; color: #444; }
.nitem.current { background: #cfe4fb; }
.nic { width: 20px; height: 20px; margin-right: 13px; flex: none; }
.nlock { width: 13px; height: 13px; flex: none; margin-left: 2px; }
.trial { position: absolute; right: 0; top: 3px; width: 53px; height: 19px; line-height: 19px; font-size: 11px; border-radius: 10px 0 0 10px; background: linear-gradient(90deg, #f1d7a4, #ecc070); color: #7a4c10; text-indent: 8px; }
.dot { position: absolute; width: 6px; height: 6px; border-radius: 50%; background: #f00; }
.dot-group { left: 17px; top: 2px; }
.dot-item { left: 29px; top: 1px; }
.scroll { flex: 1; padding: 187px 2px 0 3px; }
.thumb { height: 100%; background: #c8c8c8; border-radius: 4px 4px 0 0; }

.panels { width: 327px; margin-left: 5px; flex: none; display: flex; flex-direction: column; gap: 4px; }
.panel { display: flex; flex-direction: column; border: 1px solid #ddd; border-width: 0 1px 1px; }
.list-panel { height: 382px; flex: none; }
.prop-panel { flex: 1; min-height: 0; border-bottom: 0; }
.ptabs { height: 23px; flex: none; display: flex; background: #f2f2f2; border-bottom: 1px solid #d8d8d8; }
.ptab { width: 65px; text-align: center; line-height: 22px; background: #dedede; color: #888; border-right: 1px solid #ccc; font-weight: 500; }
.ptab.on { background: #f4f4f4; color: #333; font-weight: 700; }
.ptools { height: 28px; flex: none; display: flex; align-items: center; gap: 13px; padding: 1px 0 0 4px; border-bottom: 1px solid #e4e4e4; }
.ptool { display: flex; align-items: center; white-space: nowrap; }
.ptool .caret { margin-left: 5px; }
.more { margin-left: auto; width: 10px; height: 16px; margin-right: 1px; background: #fff; border: 1px solid #eee; border-radius: 3px; display: flex; align-items: center; justify-content: center; }
.search { height: 19px; flex: none; display: flex; align-items: center; justify-content: space-between; padding: 1px 7px 0 2px; color: #aaa; border-bottom: 1px solid #e4e4e4; }
.tree { flex: 1; padding-top: 3px; }
.row { height: 24px; display: flex; align-items: center; white-space: pre; color: #444; }
.row .caret { margin: 0 4px 0 0; }
.l1 { padding-left: 13px; }
.l2 { padding-left: 43px; }
.l2.open { padding-left: 34px; }
.l3 { padding-left: 70px; }
.picked { width: 148px; height: 21px; line-height: 21px; margin-left: -10px; padding-left: 10px; background: #c3dbf3; border-radius: 2px; }

.ptable { flex: 1; min-height: 0; display: grid; grid-template-columns: 22px 100px 201px; grid-template-rows: 21px 21px 21px 21px 21px 1fr; }
.c { border-right: 1px solid #dcdcdc; border-bottom: 1px solid #dcdcdc; padding-left: 3px; line-height: 21px; white-space: nowrap; overflow: hidden; position: relative; color: #333; }
.c.idx { background: #f0f0f0; text-align: center; padding: 0; color: #444; }
.c.head { text-align: center; padding: 0; }
.c.headv { background: #74b3f5; color: #fff; text-align: center; padding: 0; border: 1px solid #5fa3ea; font-weight: 500; }
.c.blue { color: #2a6fd8; }
.c.grey { color: #8a8a8a; }
.c.sel-idx { background: #6aaef2; color: #fff; font-weight: 700; }
.c.editing { border: 2px solid #5ca5ea; padding-left: 3px; line-height: 18px; }
.dots { position: absolute; right: 3px; top: 1px; width: 15px; height: 13px; border: 1px solid #5ca5ea; border-radius: 3px; background: #eef5fd; display: flex; align-items: center; justify-content: center; }
.idx-fill { background: #f0f0f0; grid-column: 1; }

.splitter { width: 5px; flex: none; padding-top: 371px; }
.handle { display: block; height: 101px; background: #555; }

.canvas { flex: 1; min-width: 0; position: relative; background: #000; overflow: hidden; }
.cad { display: block; }
.cad-t { font-family: "Liberation Sans", "Noto Sans CJK SC", sans-serif; }
.stair-tools { position: absolute; left: 1px; top: 2px; width: 199px; height: 40px; background: #fff; display: flex; align-items: center; padding-left: 10px; gap: 10px; }
.cic { width: 20px; height: 20px; flex: none; }
.tool-sep { width: 1px; height: 20px; background: #ccc; margin-right: -1px; }
```
